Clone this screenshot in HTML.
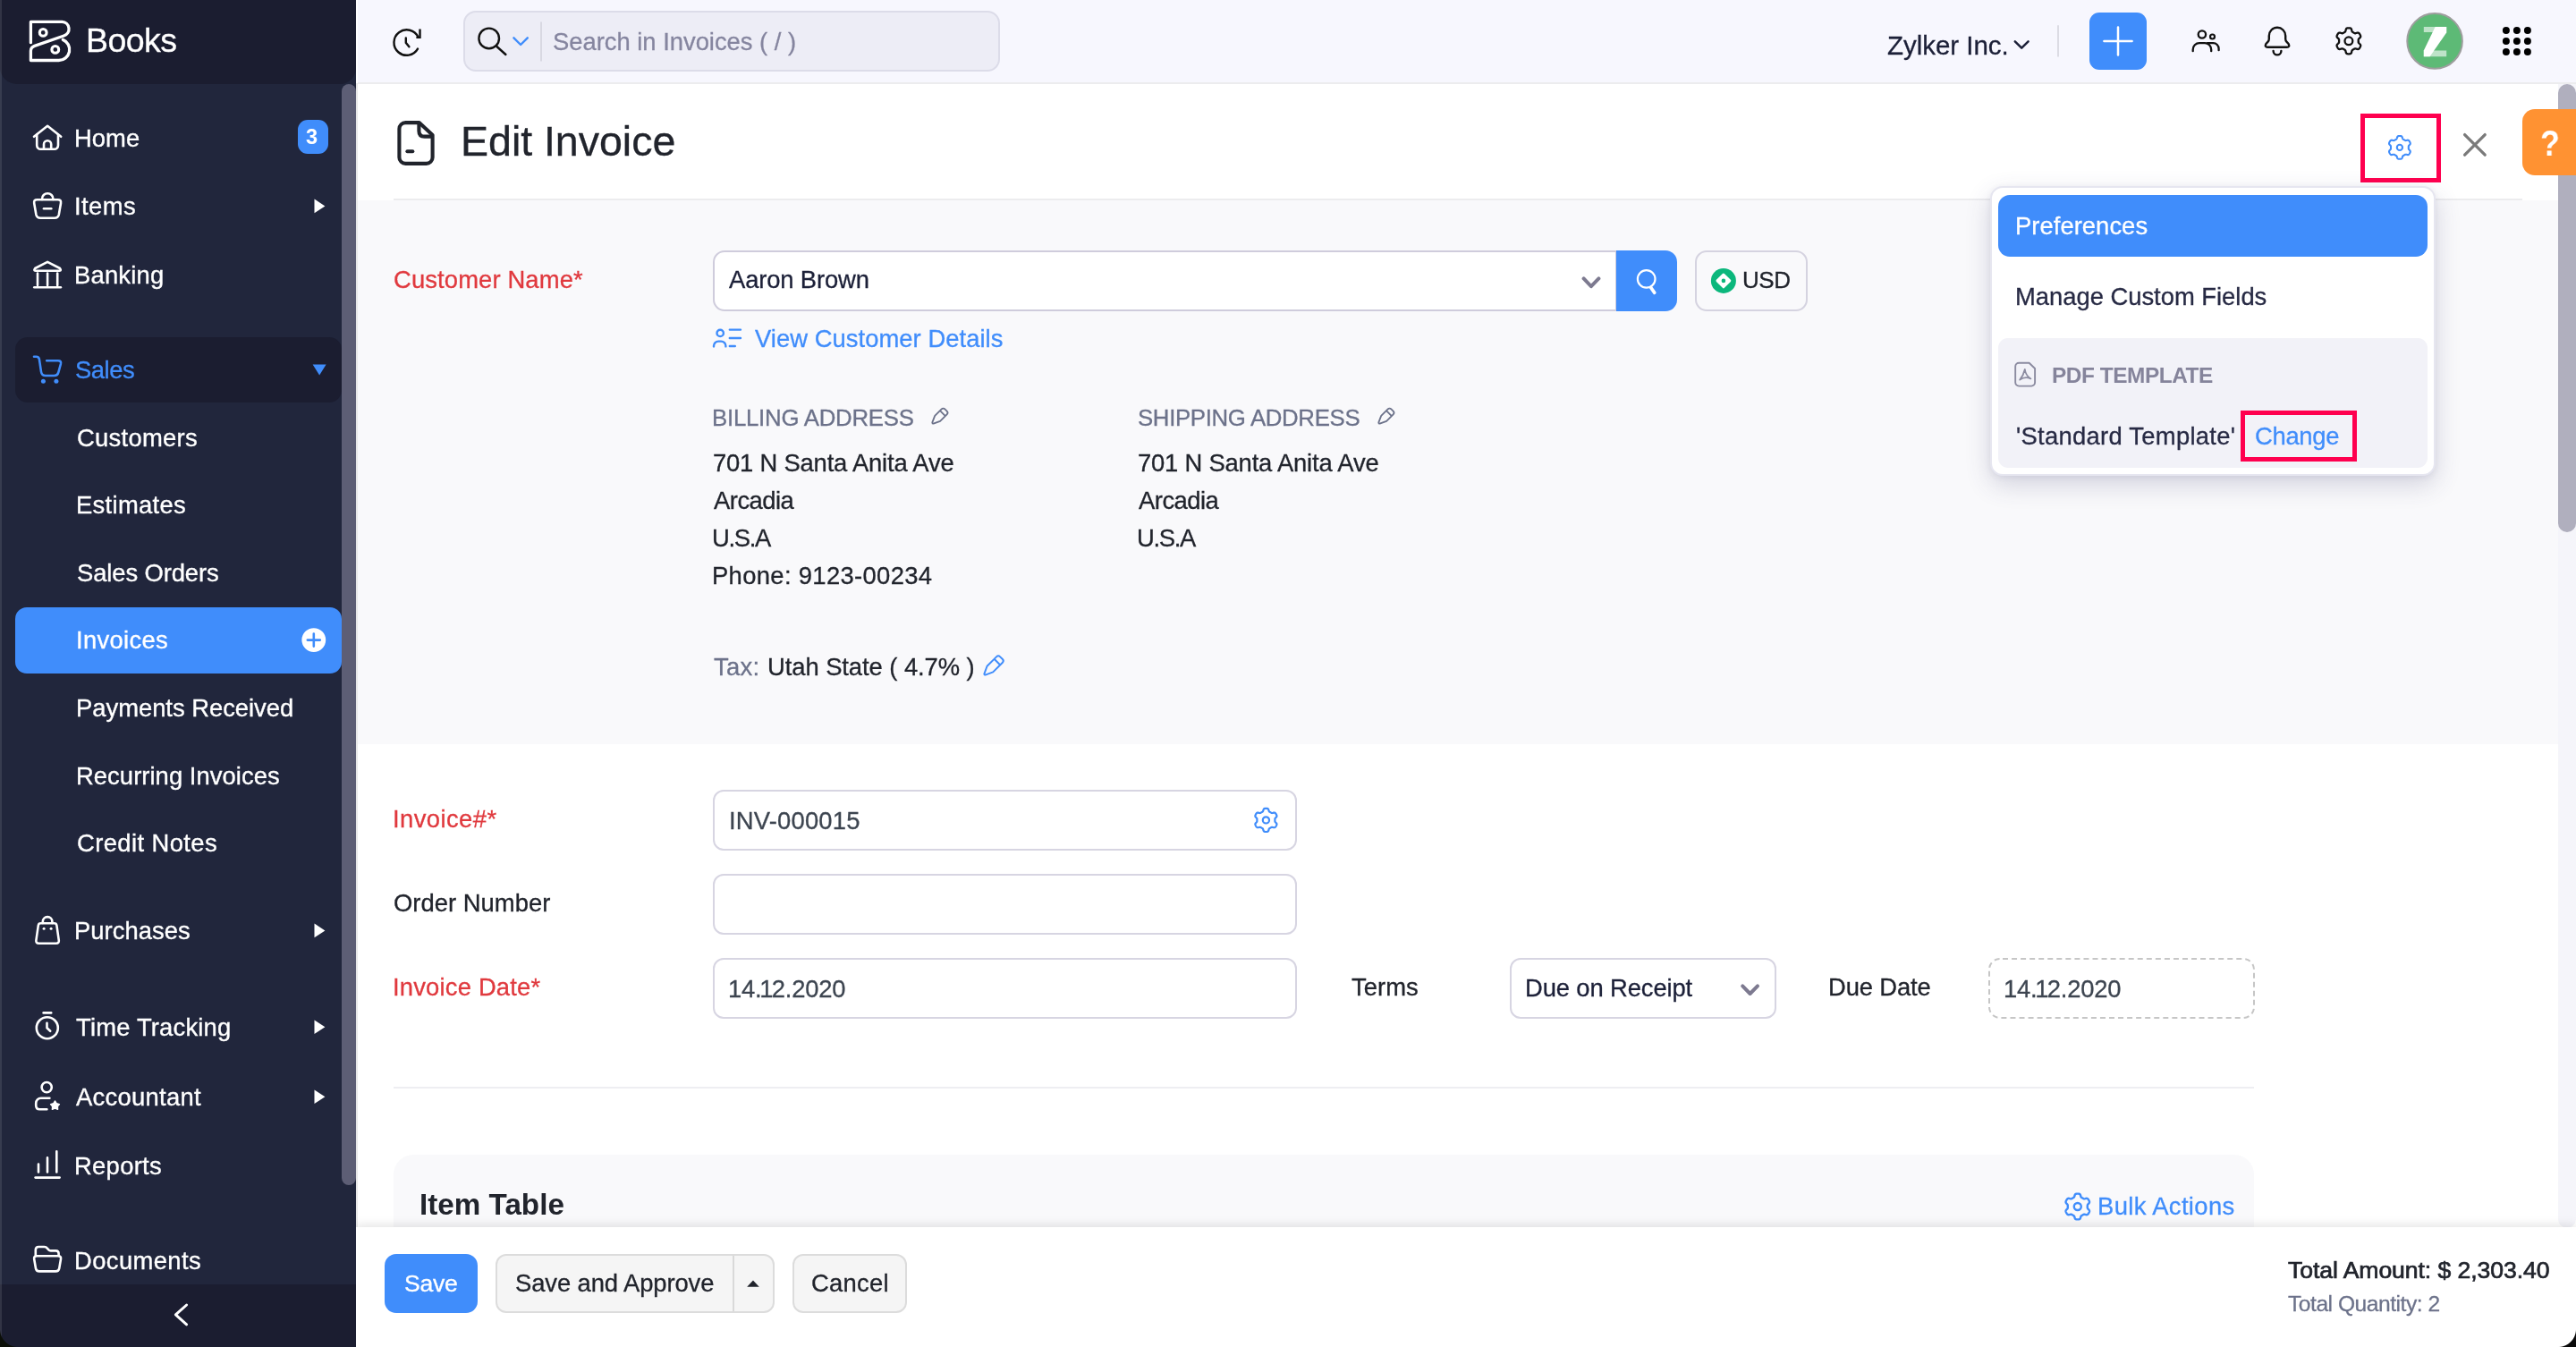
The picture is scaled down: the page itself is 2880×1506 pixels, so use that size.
<!DOCTYPE html>
<html><head><meta charset="utf-8"><title>Edit Invoice | Zoho Books</title>
<style>

*{box-sizing:border-box;margin:0;padding:0}
html,body{width:2880px;height:1506px;overflow:hidden;background:#fff}
body{font-family:"Liberation Sans",sans-serif;}
#root{position:relative;width:2880px;height:1506px;overflow:hidden;background:#fff}
.a{position:absolute}
.t{position:absolute;white-space:nowrap;will-change:transform;-webkit-text-stroke:0.3px}
svg{position:absolute;overflow:visible}
.inp{position:absolute;background:#fff;border:2px solid #d7d5e2;border-radius:12px}
.btn{position:absolute;background:#f5f5f5;border:2px solid #dcdcdc;border-radius:12px}
.ic{fill:none;stroke:#fff;stroke-width:2.6;stroke-linecap:round;stroke-linejoin:round}
.ik{fill:none;stroke:#111;stroke-width:2.6;stroke-linecap:round;stroke-linejoin:round}
.ib{fill:none;stroke:#408dfb;stroke-width:2.6;stroke-linecap:round;stroke-linejoin:round}

</style></head>
<body>
<div id="root">

<!-- main area -->
<div class="a" style="left:400px;top:0;width:2480px;height:94px;background:#f7f7fe;border-bottom:2px solid #ececee"></div>
<div class="a" style="left:398px;top:93px;width:2px;height:1413px;background:#e9e9e9"></div>
<div class="a" style="left:400px;top:224px;width:2460px;height:608px;background:#f9f9fb"></div>
<div class="a" style="left:440px;top:222px;width:2380px;height:2px;background:#ececee"></div>
<div class="a" style="left:440px;top:1215px;width:2080px;height:2px;background:#eeeef2"></div>
<div class="a" style="left:440px;top:1291px;width:2080px;height:120px;background:#f9f9fb;border-radius:22px 22px 0 0"></div>
<div class="a" style="left:518px;top:12px;width:600px;height:68px;background:#ededf6;border:2px solid #dcdce9;border-radius:14px"></div>
<!-- page scrollbar -->
<div class="a" style="left:2860px;top:94px;width:20px;height:1279px;background:#f5f5fa;border-radius:0 0 10px 10px"></div>
<div class="a" style="left:2860px;top:94px;width:20px;height:501px;background:#b0afbe;border-radius:10px"></div>
<!-- footer -->
<div class="a" style="left:398px;top:1372px;width:2482px;height:134px;background:#fff;box-shadow:0 -3px 10px rgba(0,0,0,0.10)"></div>

<!-- sidebar -->
<div class="a" style="left:0;top:0;width:398px;height:1506px;background:#21263c"></div>
<div class="a" style="left:0;top:0;width:398px;height:94px;background:#1b1d30;border-radius:0 0 18px 19px"></div>
<div class="a" style="left:382px;top:94px;width:16px;height:1231px;background:#5d5e75;border-radius:8px 8px 8px 8px"></div>
<div class="a" style="left:0;top:1436px;width:398px;height:70px;background:#1b1d30"></div>
<div class="a" style="left:17px;top:377px;width:365px;height:73px;background:#1b1d30;border-radius:14px"></div>
<div class="a" style="left:17px;top:679px;width:365px;height:74px;background:#408dfb;border-radius:13px"></div>
<div class="a" style="left:333px;top:134px;width:34px;height:38px;background:#408dfb;border-radius:11px"></div>
<div class="a" style="left:0;top:0;width:1.5px;height:1506px;background:rgba(255,255,255,0.10)"></div>
<!-- window corners -->
<div class="a" style="left:0;top:1486px;width:20px;height:20px;background:radial-gradient(circle at 20px 0px, transparent 19.5px, #0c0f08 20.5px)"></div>
<div class="a" style="left:2860px;top:1486px;width:20px;height:20px;background:radial-gradient(circle at 0px 0px, transparent 19.5px, #0a0a0a 20.5px);z-index:50"></div>
<svg style="left:30px;top:20px;width:52px;height:52px" viewBox="30 20 52 52">
<path class="ic" style="stroke-width:3.3" d="M34.4 47.7 V24.4 H69.5 A8 8 0 0 1 71.5 40 L38.6 51.4 Q34.4 53 34.4 57 V67.5 H65.5 A12 12 0 0 0 70.3 44.4"/>
<circle class="ic" style="stroke-width:3.1" cx="48.2" cy="36.4" r="3.9"/>
<circle class="ic" style="stroke-width:3.1" cx="61.8" cy="55.4" r="3.9"/>
</svg>
<svg style="left:34px;top:136px;width:38px;height:36px" viewBox="34 136 38 36">
<path class="ic" d="M38 152.8 L53.1 140.8 L68.2 152.8"/>
<path class="ic" d="M41.2 150.6 V162.6 A4.2 4.2 0 0 0 45.4 166.8 H60.8 A4.2 4.2 0 0 0 65 162.6 V150.6"/>
<path class="ic" d="M49 166.6 V161.3 A4.1 4.1 0 0 1 57.2 161.3 V166.6"/>
</svg>
<svg style="left:34px;top:212px;width:38px;height:36px" viewBox="34 212 38 36">
<path class="ic" d="M47 223 V222.4 A6.2 6.2 0 0 1 59.4 222.4 V223"/>
<path class="ic" d="M41.5 223.2 H64.7 Q68.6 223.2 68 227.2 L65.8 240 Q65 243.8 61 243.8 H45.2 Q41.2 243.8 40.4 240 L38.2 227.2 Q37.6 223.2 41.5 223.2 Z"/>
<path class="ic" d="M49 233.2 H57.3"/>
</svg>
<svg style="left:34px;top:288px;width:38px;height:38px" viewBox="34 288 38 38">
<path class="ic" d="M53.1 292.8 L67 300 Q69 302.6 66.4 302.8 H39.8 Q37.2 302.6 39.2 300 Z"/>
<path class="ic" d="M42 305.5 V319 M53.1 305.5 V319 M64.2 305.5 V319"/>
<path class="ic" d="M38.3 321.3 H67.9"/>
</svg>
<svg style="left:34px;top:394px;width:38px;height:38px" viewBox="34 394 38 38">
<path class="ib" d="M38 398.8 H40.5 Q43.4 398.8 43.9 401.6 L46 415.6 Q46.7 420 51 420 H60.6 Q64.4 420 65.3 416.4 L67.9 407 Q68.8 403.2 65 403.2 H52.2"/>
<circle cx="48.4" cy="426.2" r="2.5" fill="#408dfb"/><circle cx="62.9" cy="426.2" r="2.5" fill="#408dfb"/>
</svg>
<svg style="left:36px;top:1020px;width:36px;height:40px" viewBox="36 1020 36 40">
<path class="ic" d="M47.8 1032 V1030.4 A5.3 5.3 0 0 1 58.4 1030.4 V1032"/>
<path class="ic" d="M45.6 1032.2 H60.6 Q63 1032.2 63.4 1034.6 L65.8 1051.4 Q66.2 1054.8 62.8 1054.8 H43.4 Q40 1054.8 40.4 1051.4 L42.8 1034.6 Q43.2 1032.2 45.6 1032.2 Z"/>
<circle cx="49.1" cy="1038.2" r="1.5" fill="#fff"/><circle cx="57.1" cy="1038.2" r="1.5" fill="#fff"/>
</svg>
<svg style="left:36px;top:1128px;width:36px;height:38px" viewBox="36 1128 36 38">
<circle class="ic" cx="52.8" cy="1149.2" r="12"/>
<path class="ic" d="M48.6 1132.4 H57.2"/>
<path class="ic" d="M52.5 1143.8 V1149.3 L56.2 1152.8"/>
</svg>
<svg style="left:36px;top:1206px;width:36px;height:40px" viewBox="36 1206 36 40">
<circle class="ic" cx="52.2" cy="1215.6" r="5.6"/>
<path class="ic" d="M55.4 1227.8 H45.8 A5.6 5.6 0 0 0 40.2 1233.4 V1236 Q40.2 1240.2 44.4 1240.2 H52.4"/>
<path fill="#fff" stroke="#fff" stroke-width="1.4" stroke-linejoin="round" d="M61.5 1231.0 L63.3 1233.8 L66.4 1234.6 L64.4 1237.1 L64.6 1240.4 L61.5 1239.2 L58.4 1240.4 L58.6 1237.1 L56.6 1234.6 L59.7 1233.8 Z"/>
</svg>
<svg style="left:36px;top:1282px;width:34px;height:38px" viewBox="36 1282 34 38">
<path class="ic" d="M43 1301.6 V1310.4 M53 1294.4 V1310.4 M63.3 1287.2 V1310.4"/>
<path class="ic" d="M39.6 1316.6 H66.6"/>
</svg>
<svg style="left:34px;top:1390px;width:38px;height:36px" viewBox="34 1390 38 36">
<path class="ic" d="M39.8 1403.6 V1397.4 Q39.8 1394 43.2 1394 H49.6 Q51.6 1394 52.8 1395.6 L54.4 1397.4 Q55.2 1398.4 56.8 1398.4 H62.4 Q65.6 1398.4 65.6 1401.6 V1403.6"/>
<path class="ic" d="M41.2 1404.2 H65 Q68.6 1404.2 68 1407.8 L66.2 1418.2 Q65.6 1421.4 62.2 1421.4 H44 Q40.6 1421.4 40 1418.2 L38.2 1407.8 Q37.6 1404.2 41.2 1404.2 Z"/>
</svg>
<svg style="left:345px;top:190px;width:30px;height:1110px" viewBox="345 190 30 1110">
<path fill="#fff" d="M351.5 222.6 L363.4 230.4 L351.5 238.2 Z"/>
<path fill="#fff" d="M351.5 1032.6 L363.4 1040.4 L351.5 1048.2 Z"/>
<path fill="#fff" d="M351.5 1140.4 L363.4 1148.2 L351.5 1156 Z"/>
<path fill="#fff" d="M351.5 1218.4 L363.4 1226.2 L351.5 1234 Z"/>
</svg>
<svg style="left:345px;top:400px;width:30px;height:30px" viewBox="345 400 30 30"><path fill="#408dfb" d="M349.6 407.6 H364.6 L357.1 419.4 Z"/></svg>
<svg style="left:336px;top:701px;width:30px;height:30px" viewBox="336 701 30 30">
<circle cx="350.8" cy="715.6" r="13.4" fill="#fff"/>
<path d="M350.8 708.6 V722.6 M343.8 715.6 H357.8" stroke="#408dfb" stroke-width="2.6" stroke-linecap="round" fill="none"/>
</svg>
<svg style="left:190px;top:1454px;width:26px;height:32px" viewBox="190 1454 26 32"><path class="ic" style="stroke-width:3" d="M208.6 1459 L196.4 1469.9 L208.6 1480.8"/></svg>
<svg style="left:436px;top:28px;width:38px;height:38px" viewBox="436 28 38 38">
<path class="ik" style="stroke-width:2.4" d="M467.5 41.5 A14.2 14.2 0 1 0 467.0 54.6"/>
<path class="ik" style="stroke-width:2.4;stroke-linejoin:miter;stroke-linecap:butt" d="M469.5 32.6 V41.9 H465.4"/>
<path class="ik" style="stroke-width:2.4;stroke-linejoin:miter" d="M453.8 42.4 V47.8 L457.4 52.2"/>
</svg>
<svg style="left:530px;top:26px;width:80px;height:46px" viewBox="530 26 80 46">
<circle class="ik" style="stroke-width:2.4" cx="546.7" cy="42.9" r="11.3"/>
<path class="ik" style="stroke-width:2.4" d="M555.4 52 L565.4 61"/>
<path class="ib" style="stroke-width:2.4" d="M574.4 42.3 L582.1 50 L589.8 42.3"/>
<path d="M605 24.5 V68.5" stroke="#d8d8e2" stroke-width="2" fill="none"/>
</svg>
<svg style="left:2248px;top:24px;width:60px;height:46px" viewBox="2248 24 60 46">
<path class="ik" style="stroke:#1c2038;stroke-width:2.5" d="M2252.8 46.3 L2260.2 53.7 L2267.6 46.3"/>
<path d="M2301 28.2 V63.4" stroke="#dcdce4" stroke-width="2" fill="none"/>
</svg>
<div class="a" style="left:2336px;top:14px;width:64px;height:64px;background:#408dfb;border-radius:11px"></div>
<svg style="left:2336px;top:14px;width:64px;height:64px" viewBox="2336 14 64 64"><path d="M2352.4 45.9 H2383.6 M2368 30.4 V61.6" stroke="#fff" stroke-width="2.5" stroke-linecap="round" fill="none"/></svg>
<svg style="left:2446px;top:28px;width:40px;height:36px" viewBox="2446 28 40 36">
<circle class="ik" style="stroke-width:2.3" cx="2461.9" cy="38.5" r="4.2"/>
<circle class="ik" style="stroke-width:2.2" cx="2473.5" cy="41" r="2.5"/>
<path class="ik" style="stroke-width:2.3" d="M2451.7 57.2 V55.4 A7.2 7.2 0 0 1 2458.9 48.2 H2465 A7.2 7.2 0 0 1 2472.2 55.4 V57.2"/>
<path class="ik" style="stroke-width:2.3" d="M2468 48.2 H2474.4 A6.2 6.2 0 0 1 2480.6 54.4 V56.2"/>
</svg>
<svg style="left:2528px;top:26px;width:36px;height:40px" viewBox="2528 26 36 40">
<path class="ik" style="stroke-width:2.4" d="M2546 30.8 A9.2 9.2 0 0 1 2555.2 40 V43.6 Q2555.2 45.4 2556.4 46.6 L2558.6 49 Q2560.4 52.8 2556.8 52.8 H2535.2 Q2531.6 52.8 2533.4 49 L2535.6 46.6 Q2536.8 45.4 2536.8 43.6 V40 A9.2 9.2 0 0 1 2546 30.8 Z"/>
<path class="ik" style="stroke-width:2.4" d="M2541.6 57 A4.4 4.4 0 0 0 2550.4 57"/>
</svg>
<svg style="left:2608px;top:28px;width:36px;height:36px" viewBox="2608 28 36 36"><path d="M2636.70 45.80 L2636.70 46.18 L2636.69 46.55 L2636.70 46.94 L2636.74 47.32 L2636.86 47.73 L2637.18 48.20 L2637.76 48.76 L2638.47 49.40 L2639.00 50.06 L2639.21 50.65 L2639.21 51.18 L2639.09 51.67 L2638.91 52.15 L2638.70 52.61 L2638.46 53.05 L2638.19 53.48 L2637.90 53.90 L2637.58 54.29 L2637.21 54.64 L2636.75 54.91 L2636.13 55.01 L2635.31 54.89 L2634.39 54.59 L2633.61 54.37 L2633.06 54.33 L2632.64 54.42 L2632.28 54.59 L2631.95 54.77 L2631.63 54.96 L2631.30 55.15 L2630.97 55.34 L2630.64 55.53 L2630.32 55.72 L2630.00 55.95 L2629.71 56.26 L2629.46 56.76 L2629.27 57.55 L2629.06 58.49 L2628.76 59.27 L2628.36 59.75 L2627.90 60.02 L2627.41 60.16 L2626.91 60.24 L2626.41 60.29 L2625.90 60.30 L2625.39 60.29 L2624.89 60.24 L2624.39 60.16 L2623.90 60.02 L2623.44 59.75 L2623.04 59.27 L2622.74 58.49 L2622.53 57.55 L2622.34 56.76 L2622.09 56.26 L2621.80 55.95 L2621.48 55.72 L2621.16 55.53 L2620.83 55.34 L2620.50 55.15 L2620.17 54.96 L2619.85 54.77 L2619.52 54.59 L2619.16 54.42 L2618.74 54.33 L2618.19 54.37 L2617.41 54.59 L2616.49 54.89 L2615.67 55.01 L2615.05 54.91 L2614.59 54.64 L2614.22 54.29 L2613.90 53.90 L2613.61 53.48 L2613.34 53.05 L2613.10 52.61 L2612.89 52.15 L2612.71 51.67 L2612.59 51.18 L2612.59 50.65 L2612.80 50.06 L2613.33 49.40 L2614.04 48.76 L2614.62 48.20 L2614.94 47.73 L2615.06 47.32 L2615.10 46.94 L2615.11 46.55 L2615.10 46.18 L2615.10 45.80 L2615.10 45.42 L2615.11 45.05 L2615.10 44.66 L2615.06 44.28 L2614.94 43.87 L2614.62 43.40 L2614.04 42.84 L2613.33 42.20 L2612.80 41.54 L2612.59 40.95 L2612.59 40.42 L2612.71 39.93 L2612.89 39.45 L2613.10 38.99 L2613.34 38.55 L2613.61 38.12 L2613.90 37.70 L2614.22 37.31 L2614.59 36.96 L2615.05 36.69 L2615.67 36.59 L2616.49 36.71 L2617.41 37.01 L2618.19 37.23 L2618.74 37.27 L2619.16 37.18 L2619.52 37.01 L2619.85 36.83 L2620.17 36.64 L2620.50 36.45 L2620.83 36.26 L2621.16 36.07 L2621.48 35.88 L2621.80 35.65 L2622.09 35.34 L2622.34 34.84 L2622.53 34.05 L2622.74 33.11 L2623.04 32.33 L2623.44 31.85 L2623.90 31.58 L2624.39 31.44 L2624.89 31.36 L2625.39 31.31 L2625.90 31.30 L2626.41 31.31 L2626.91 31.36 L2627.41 31.44 L2627.90 31.58 L2628.36 31.85 L2628.76 32.33 L2629.06 33.11 L2629.27 34.05 L2629.46 34.84 L2629.71 35.34 L2630.00 35.65 L2630.32 35.88 L2630.64 36.07 L2630.97 36.26 L2631.30 36.45 L2631.63 36.64 L2631.95 36.83 L2632.28 37.01 L2632.64 37.18 L2633.06 37.27 L2633.61 37.23 L2634.39 37.01 L2635.31 36.71 L2636.13 36.59 L2636.75 36.69 L2637.21 36.96 L2637.58 37.31 L2637.90 37.70 L2638.19 38.12 L2638.46 38.55 L2638.70 38.99 L2638.91 39.45 L2639.09 39.93 L2639.21 40.42 L2639.21 40.95 L2639.00 41.54 L2638.47 42.20 L2637.76 42.84 L2637.18 43.40 L2636.86 43.87 L2636.74 44.28 L2636.70 44.66 L2636.69 45.05 L2636.70 45.42Z" fill="none" stroke="#111" stroke-width="2.3" stroke-linejoin="round"/><circle cx="2625.9" cy="45.8" r="4.4" fill="none" stroke="#111" stroke-width="2.3"/></svg>
<svg style="left:2688px;top:12px;width:68px;height:68px" viewBox="2688 12 68 68">
<circle cx="2722.1" cy="45.9" r="30.8" fill="#5dba76" stroke="#9e9e9e" stroke-width="2"/>
<path fill="#ffffff" fill-opacity="0.6" d="M2709.8 29.9 H2735.2 V35.9 H2709.8 Z M2709.8 56.6 H2735.2 V63.2 H2709.8 Z"/>
<path fill="#ffffff" d="M2722.6 29.9 H2735.2 V36.4 L2716.6 63.2 H2709.8 V56.6 Z"/>
</svg>
<svg style="left:2796px;top:28px;width:36px;height:36px" viewBox="2796 28 36 36"><circle cx="2801.9" cy="34" r="4" fill="#000"/><circle cx="2801.9" cy="45.9" r="4" fill="#000"/><circle cx="2801.9" cy="57.9" r="4" fill="#000"/><circle cx="2813.9" cy="34" r="4" fill="#000"/><circle cx="2813.9" cy="45.9" r="4" fill="#000"/><circle cx="2813.9" cy="57.9" r="4" fill="#000"/><circle cx="2825.9" cy="34" r="4" fill="#000"/><circle cx="2825.9" cy="45.9" r="4" fill="#000"/><circle cx="2825.9" cy="57.9" r="4" fill="#000"/></svg>
<svg style="left:440px;top:130px;width:50px;height:60px" viewBox="440 130 50 60">
<path d="M453.4 137.1 H468.6 L483.6 151 V175.9 A7 7 0 0 1 476.6 182.9 H453.4 A7 7 0 0 1 446.4 175.9 V144.1 A7 7 0 0 1 453.4 137.1 Z" fill="none" stroke="#21242c" stroke-width="4.1" stroke-linejoin="round"/>
<path d="M468.4 138.5 V146.4 Q468.4 152.6 474.6 152.6 H482.4" fill="none" stroke="#21242c" stroke-width="4.1" stroke-linejoin="round"/>
<path d="M455.4 169.3 H461.3" fill="none" stroke="#21242c" stroke-width="4.1" stroke-linecap="round"/>
</svg>
<div class="a" style="left:2639px;top:127px;width:90px;height:77px;border:5px solid #ff004f"></div>
<svg style="left:2664px;top:146px;width:38px;height:38px" viewBox="2664 146 38 38"><path d="M2692.80 164.90 L2692.80 165.25 L2692.79 165.59 L2692.79 165.94 L2692.82 166.29 L2692.91 166.67 L2693.16 167.08 L2693.62 167.57 L2694.19 168.14 L2694.61 168.70 L2694.77 169.22 L2694.75 169.69 L2694.64 170.13 L2694.48 170.55 L2694.29 170.95 L2694.07 171.35 L2693.84 171.73 L2693.58 172.10 L2693.30 172.45 L2692.97 172.77 L2692.58 173.02 L2692.05 173.14 L2691.35 173.06 L2690.58 172.85 L2689.92 172.70 L2689.44 172.69 L2689.07 172.79 L2688.75 172.95 L2688.45 173.12 L2688.15 173.30 L2687.85 173.47 L2687.55 173.64 L2687.25 173.81 L2686.95 173.99 L2686.65 174.19 L2686.38 174.46 L2686.14 174.88 L2685.95 175.52 L2685.74 176.30 L2685.46 176.94 L2685.09 177.34 L2684.68 177.56 L2684.24 177.68 L2683.80 177.75 L2683.35 177.79 L2682.90 177.80 L2682.45 177.79 L2682.00 177.75 L2681.56 177.68 L2681.12 177.56 L2680.71 177.34 L2680.34 176.94 L2680.06 176.30 L2679.85 175.52 L2679.66 174.88 L2679.42 174.46 L2679.15 174.19 L2678.85 173.99 L2678.55 173.81 L2678.25 173.64 L2677.95 173.47 L2677.65 173.30 L2677.35 173.12 L2677.05 172.95 L2676.73 172.79 L2676.36 172.69 L2675.88 172.70 L2675.22 172.85 L2674.45 173.06 L2673.75 173.14 L2673.22 173.02 L2672.83 172.77 L2672.50 172.45 L2672.22 172.10 L2671.96 171.73 L2671.73 171.35 L2671.51 170.95 L2671.32 170.55 L2671.16 170.13 L2671.05 169.69 L2671.03 169.22 L2671.19 168.70 L2671.61 168.14 L2672.18 167.57 L2672.64 167.08 L2672.89 166.67 L2672.98 166.29 L2673.01 165.94 L2673.01 165.59 L2673.00 165.25 L2673.00 164.90 L2673.00 164.55 L2673.01 164.21 L2673.01 163.86 L2672.98 163.51 L2672.89 163.13 L2672.64 162.72 L2672.18 162.23 L2671.61 161.66 L2671.19 161.10 L2671.03 160.58 L2671.05 160.11 L2671.16 159.67 L2671.32 159.25 L2671.51 158.85 L2671.73 158.45 L2671.96 158.07 L2672.22 157.70 L2672.50 157.35 L2672.83 157.03 L2673.22 156.78 L2673.75 156.66 L2674.45 156.74 L2675.22 156.95 L2675.88 157.10 L2676.36 157.11 L2676.73 157.01 L2677.05 156.85 L2677.35 156.68 L2677.65 156.50 L2677.95 156.33 L2678.25 156.16 L2678.55 155.99 L2678.85 155.81 L2679.15 155.61 L2679.42 155.34 L2679.66 154.92 L2679.85 154.28 L2680.06 153.50 L2680.34 152.86 L2680.71 152.46 L2681.12 152.24 L2681.56 152.12 L2682.00 152.05 L2682.45 152.01 L2682.90 152.00 L2683.35 152.01 L2683.80 152.05 L2684.24 152.12 L2684.68 152.24 L2685.09 152.46 L2685.46 152.86 L2685.74 153.50 L2685.95 154.28 L2686.14 154.92 L2686.38 155.34 L2686.65 155.61 L2686.95 155.81 L2687.25 155.99 L2687.55 156.16 L2687.85 156.33 L2688.15 156.50 L2688.45 156.68 L2688.75 156.85 L2689.07 157.01 L2689.44 157.11 L2689.92 157.10 L2690.58 156.95 L2691.35 156.74 L2692.05 156.66 L2692.58 156.78 L2692.97 157.03 L2693.30 157.35 L2693.58 157.70 L2693.84 158.07 L2694.07 158.45 L2694.29 158.85 L2694.48 159.25 L2694.64 159.67 L2694.75 160.11 L2694.77 160.58 L2694.61 161.10 L2694.19 161.66 L2693.62 162.23 L2693.16 162.72 L2692.91 163.13 L2692.82 163.51 L2692.79 163.86 L2692.79 164.21 L2692.80 164.55Z" fill="none" stroke="#408dfb" stroke-width="2.1" stroke-linejoin="round"/><circle cx="2682.9" cy="164.9" r="3.1" fill="none" stroke="#408dfb" stroke-width="2.1"/></svg>
<svg style="left:2750px;top:146px;width:34px;height:34px" viewBox="2750 146 34 34"><path d="M2755.6 150.6 L2778.2 173.2 M2778.2 150.6 L2755.6 173.2" stroke="#7a7a7a" stroke-width="3.3" stroke-linecap="round" fill="none"/></svg>
<div class="a" style="left:2820px;top:122px;width:60px;height:74px;background:#ff9232;border-radius:14px 0 0 14px;z-index:5"></div>
<div class="inp" style="left:797px;top:280px;width:1011px;height:68px;border-color:#cfccdc;border-radius:13px 0 0 13px"></div>
<div class="a" style="left:1807px;top:280px;width:68px;height:68px;background:#408dfb;border-radius:0 13px 13px 0"></div>
<svg style="left:1764px;top:300px;width:120px;height:34px" viewBox="1764 300 120 34">
<path d="M1770.6 311.4 L1778.9 320.2 L1787.4 311.4" fill="none" stroke="#7d7a90" stroke-width="4" stroke-linecap="round" stroke-linejoin="round"/>
<circle cx="1840.7" cy="311.9" r="9.8" fill="none" stroke="#fff" stroke-width="2.2"/>
<path d="M1845.6 321.4 L1849.8 327.4" stroke="#fff" stroke-width="3.6" stroke-linecap="round" fill="none"/>
</svg>
<div class="a" style="left:1895px;top:280px;width:126px;height:68px;border:2px solid #d5d3e0;border-radius:13px"></div>
<svg style="left:1912px;top:299px;width:30px;height:30px" viewBox="1912 299 30 30">
<circle cx="1926.9" cy="313.9" r="14" fill="#0bb77c"/>
<path d="M1926.9 307 L1933.8 313.9 L1926.9 320.8 L1920 313.9 Z" fill="#fff" stroke="#fff" stroke-width="3" stroke-linejoin="round"/>
<circle cx="1926.9" cy="313.9" r="2.3" fill="#0bb77c"/>
</svg>
<svg style="left:794px;top:364px;width:40px;height:28px" viewBox="794 364 40 28">
<circle class="ib" style="stroke-width:2.4" cx="805.2" cy="372.4" r="3.7"/>
<path class="ib" style="stroke-width:2.4" d="M798 387.4 V386.8 A5.2 5.2 0 0 1 803.2 381.6 H806.2 A5.2 5.2 0 0 1 811.4 386.8 V387.4"/>
<path class="ib" style="stroke-width:2.4" d="M815.8 368.6 H828 M815.8 378 H828 M815.8 387 H821.8"/>
</svg>
<svg style="left:1036px;top:452px;width:30px;height:30px" viewBox="1036 452 30 30"><g transform="translate(1050.0 466.0) rotate(45)"><path d="M-4.2 -8.0 a2.6 2.6 0 0 1 2.6 -2.6 h3.2 a2.6 2.6 0 0 1 2.6 2.6 V2.62 L0.9 10.0 Q0 10.9 -0.9 10.0 L-4.2 2.62 Z M-4.2 -5.512 H4.2" fill="none" stroke="#6c728a" stroke-width="1.8" stroke-linejoin="round" stroke-linecap="round"/></g></svg>
<svg style="left:1535px;top:452px;width:30px;height:30px" viewBox="1535 452 30 30"><g transform="translate(1549.0 466.0) rotate(45)"><path d="M-4.2 -8.0 a2.6 2.6 0 0 1 2.6 -2.6 h3.2 a2.6 2.6 0 0 1 2.6 2.6 V2.62 L0.9 10.0 Q0 10.9 -0.9 10.0 L-4.2 2.62 Z M-4.2 -5.512 H4.2" fill="none" stroke="#6c728a" stroke-width="1.8" stroke-linejoin="round" stroke-linecap="round"/></g></svg>
<svg style="left:1095px;top:730px;width:32px;height:32px" viewBox="1095 730 32 32"><g transform="translate(1110.0 745.0) rotate(45)"><path d="M-4.7 -10.700000000000001 a2.6 2.6 0 0 1 2.6 -2.6 h4.2 a2.6 2.6 0 0 1 2.6 2.6 V4.370000000000001 L0.9 12.700000000000001 Q0 13.600000000000001 -0.9 12.700000000000001 L-4.7 4.370000000000001 Z M-4.7 -6.916 H4.7" fill="none" stroke="#408dfb" stroke-width="2.0" stroke-linejoin="round" stroke-linecap="round"/></g></svg>
<div class="inp" style="left:797px;top:883px;width:653px;height:68px"></div>
<div class="inp" style="left:797px;top:977px;width:653px;height:68px"></div>
<div class="inp" style="left:797px;top:1071px;width:653px;height:68px"></div>
<svg style="left:1396px;top:898px;width:38px;height:38px" viewBox="1396 898 38 38"><path d="M1425.40 916.90 L1425.40 917.25 L1425.39 917.60 L1425.39 917.95 L1425.42 918.31 L1425.52 918.68 L1425.78 919.11 L1426.26 919.61 L1426.85 920.18 L1427.28 920.76 L1427.45 921.29 L1427.43 921.76 L1427.32 922.21 L1427.16 922.63 L1426.96 923.05 L1426.74 923.45 L1426.51 923.84 L1426.25 924.22 L1425.96 924.57 L1425.63 924.89 L1425.22 925.14 L1424.68 925.26 L1423.97 925.17 L1423.17 924.95 L1422.50 924.79 L1422.01 924.77 L1421.63 924.87 L1421.31 925.03 L1421.00 925.20 L1420.70 925.38 L1420.40 925.56 L1420.10 925.73 L1419.79 925.90 L1419.49 926.08 L1419.19 926.28 L1418.92 926.56 L1418.68 926.99 L1418.48 927.66 L1418.28 928.46 L1418.00 929.12 L1417.63 929.53 L1417.21 929.75 L1416.76 929.88 L1416.31 929.95 L1415.86 929.99 L1415.40 930.00 L1414.94 929.99 L1414.49 929.95 L1414.04 929.88 L1413.59 929.75 L1413.17 929.53 L1412.80 929.12 L1412.52 928.46 L1412.32 927.66 L1412.12 926.99 L1411.88 926.56 L1411.61 926.28 L1411.31 926.08 L1411.01 925.90 L1410.70 925.73 L1410.40 925.56 L1410.10 925.38 L1409.80 925.20 L1409.49 925.03 L1409.17 924.87 L1408.79 924.77 L1408.30 924.79 L1407.63 924.95 L1406.83 925.17 L1406.12 925.26 L1405.58 925.14 L1405.17 924.89 L1404.84 924.57 L1404.55 924.22 L1404.29 923.84 L1404.06 923.45 L1403.84 923.05 L1403.64 922.63 L1403.48 922.21 L1403.37 921.76 L1403.35 921.29 L1403.52 920.76 L1403.95 920.18 L1404.54 919.61 L1405.02 919.11 L1405.28 918.68 L1405.38 918.31 L1405.41 917.95 L1405.41 917.60 L1405.40 917.25 L1405.40 916.90 L1405.40 916.55 L1405.41 916.20 L1405.41 915.85 L1405.38 915.49 L1405.28 915.12 L1405.02 914.69 L1404.54 914.19 L1403.95 913.62 L1403.52 913.04 L1403.35 912.51 L1403.37 912.04 L1403.48 911.59 L1403.64 911.17 L1403.84 910.75 L1404.06 910.35 L1404.29 909.96 L1404.55 909.58 L1404.84 909.23 L1405.17 908.91 L1405.58 908.66 L1406.12 908.54 L1406.83 908.63 L1407.63 908.85 L1408.30 909.01 L1408.79 909.03 L1409.17 908.93 L1409.49 908.77 L1409.80 908.60 L1410.10 908.42 L1410.40 908.24 L1410.70 908.07 L1411.01 907.90 L1411.31 907.72 L1411.61 907.52 L1411.88 907.24 L1412.12 906.81 L1412.32 906.14 L1412.52 905.34 L1412.80 904.68 L1413.17 904.27 L1413.59 904.05 L1414.04 903.92 L1414.49 903.85 L1414.94 903.81 L1415.40 903.80 L1415.86 903.81 L1416.31 903.85 L1416.76 903.92 L1417.21 904.05 L1417.63 904.27 L1418.00 904.68 L1418.28 905.34 L1418.48 906.14 L1418.68 906.81 L1418.92 907.24 L1419.19 907.52 L1419.49 907.72 L1419.79 907.90 L1420.10 908.07 L1420.40 908.24 L1420.70 908.42 L1421.00 908.60 L1421.31 908.77 L1421.63 908.93 L1422.01 909.03 L1422.50 909.01 L1423.17 908.85 L1423.97 908.63 L1424.68 908.54 L1425.22 908.66 L1425.63 908.91 L1425.96 909.23 L1426.25 909.58 L1426.51 909.96 L1426.74 910.35 L1426.96 910.75 L1427.16 911.17 L1427.32 911.59 L1427.43 912.04 L1427.45 912.51 L1427.28 913.04 L1426.85 913.62 L1426.26 914.19 L1425.78 914.69 L1425.52 915.12 L1425.42 915.49 L1425.39 915.85 L1425.39 916.20 L1425.40 916.55Z" fill="none" stroke="#408dfb" stroke-width="2.2" stroke-linejoin="round"/><circle cx="1415.4" cy="916.9" r="3.6" fill="none" stroke="#408dfb" stroke-width="2.2"/></svg>
<div class="inp" style="left:1688px;top:1071px;width:298px;height:68px"></div>
<svg style="left:1940px;top:1094px;width:34px;height:26px" viewBox="1940 1094 34 26"><path d="M1948.2 1102.4 L1956.6 1111 L1965 1102.4" fill="none" stroke="#7d7a90" stroke-width="4" stroke-linecap="round" stroke-linejoin="round"/></svg>
<svg style="left:2222px;top:1070px;width:300px;height:70px" viewBox="2222 1070 300 70"><rect x="2224" y="1072" width="296" height="66" rx="12" ry="12" fill="#fff" stroke="#c6c6c6" stroke-width="2" stroke-dasharray="6 4.05" stroke-dashoffset="-3"/></svg>
<svg style="left:2303px;top:1330px;width:40px;height:40px" viewBox="2303 1330 40 40"><path d="M2333.80 1349.00 L2333.80 1349.38 L2333.79 1349.77 L2333.79 1350.16 L2333.82 1350.55 L2333.93 1350.96 L2334.21 1351.43 L2334.74 1351.98 L2335.39 1352.61 L2335.86 1353.24 L2336.04 1353.82 L2336.03 1354.34 L2335.91 1354.83 L2335.73 1355.30 L2335.51 1355.76 L2335.27 1356.20 L2335.01 1356.63 L2334.72 1357.04 L2334.41 1357.43 L2334.04 1357.78 L2333.60 1358.06 L2333.00 1358.19 L2332.22 1358.10 L2331.35 1357.85 L2330.61 1357.67 L2330.07 1357.66 L2329.65 1357.77 L2329.30 1357.94 L2328.96 1358.14 L2328.63 1358.33 L2328.30 1358.53 L2327.97 1358.72 L2327.63 1358.90 L2327.30 1359.10 L2326.97 1359.32 L2326.67 1359.62 L2326.41 1360.10 L2326.19 1360.83 L2325.97 1361.70 L2325.65 1362.43 L2325.25 1362.88 L2324.79 1363.13 L2324.30 1363.27 L2323.80 1363.35 L2323.30 1363.39 L2322.80 1363.40 L2322.30 1363.39 L2321.80 1363.35 L2321.30 1363.27 L2320.81 1363.13 L2320.35 1362.88 L2319.95 1362.43 L2319.63 1361.70 L2319.41 1360.83 L2319.19 1360.10 L2318.93 1359.62 L2318.63 1359.32 L2318.30 1359.10 L2317.97 1358.90 L2317.63 1358.72 L2317.30 1358.53 L2316.97 1358.33 L2316.64 1358.14 L2316.30 1357.94 L2315.95 1357.77 L2315.53 1357.66 L2314.99 1357.67 L2314.25 1357.85 L2313.38 1358.10 L2312.60 1358.19 L2312.00 1358.06 L2311.56 1357.78 L2311.19 1357.43 L2310.88 1357.04 L2310.59 1356.63 L2310.33 1356.20 L2310.09 1355.76 L2309.87 1355.30 L2309.69 1354.83 L2309.57 1354.34 L2309.56 1353.82 L2309.74 1353.24 L2310.21 1352.61 L2310.86 1351.98 L2311.39 1351.43 L2311.67 1350.96 L2311.78 1350.55 L2311.81 1350.16 L2311.81 1349.77 L2311.80 1349.38 L2311.80 1349.00 L2311.80 1348.62 L2311.81 1348.23 L2311.81 1347.84 L2311.78 1347.45 L2311.67 1347.04 L2311.39 1346.57 L2310.86 1346.02 L2310.21 1345.39 L2309.74 1344.76 L2309.56 1344.18 L2309.57 1343.66 L2309.69 1343.17 L2309.87 1342.70 L2310.09 1342.24 L2310.33 1341.80 L2310.59 1341.37 L2310.88 1340.96 L2311.19 1340.57 L2311.56 1340.22 L2312.00 1339.94 L2312.60 1339.81 L2313.38 1339.90 L2314.25 1340.15 L2314.99 1340.33 L2315.53 1340.34 L2315.95 1340.23 L2316.30 1340.06 L2316.64 1339.86 L2316.97 1339.67 L2317.30 1339.47 L2317.63 1339.28 L2317.97 1339.10 L2318.30 1338.90 L2318.63 1338.68 L2318.93 1338.38 L2319.19 1337.90 L2319.41 1337.17 L2319.63 1336.30 L2319.95 1335.57 L2320.35 1335.12 L2320.81 1334.87 L2321.30 1334.73 L2321.80 1334.65 L2322.30 1334.61 L2322.80 1334.60 L2323.30 1334.61 L2323.80 1334.65 L2324.30 1334.73 L2324.79 1334.87 L2325.25 1335.12 L2325.65 1335.57 L2325.97 1336.30 L2326.19 1337.17 L2326.41 1337.90 L2326.67 1338.38 L2326.97 1338.68 L2327.30 1338.90 L2327.63 1339.10 L2327.97 1339.28 L2328.30 1339.47 L2328.63 1339.67 L2328.96 1339.86 L2329.30 1340.06 L2329.65 1340.23 L2330.07 1340.34 L2330.61 1340.33 L2331.35 1340.15 L2332.22 1339.90 L2333.00 1339.81 L2333.60 1339.94 L2334.04 1340.22 L2334.41 1340.57 L2334.72 1340.96 L2335.01 1341.37 L2335.27 1341.80 L2335.51 1342.24 L2335.73 1342.70 L2335.91 1343.17 L2336.03 1343.66 L2336.04 1344.18 L2335.86 1344.76 L2335.39 1345.39 L2334.74 1346.02 L2334.21 1346.57 L2333.93 1347.04 L2333.82 1347.45 L2333.79 1347.84 L2333.79 1348.23 L2333.80 1348.62Z" fill="none" stroke="#408dfb" stroke-width="2.4" stroke-linejoin="round"/><circle cx="2322.8" cy="1349" r="4.0" fill="none" stroke="#408dfb" stroke-width="2.4"/></svg>
<div class="a" style="left:430px;top:1402px;width:104px;height:66px;background:#408dfb;border-radius:13px;z-index:20"></div>
<div class="btn" style="left:554px;top:1402px;width:312px;height:66px;z-index:20"></div>
<div class="a" style="left:819px;top:1404px;width:2px;height:62px;background:#d9d9d9;z-index:21"></div>
<div class="btn" style="left:886px;top:1402px;width:128px;height:66px;z-index:20"></div>
<svg style="left:830px;top:1424px;width:24px;height:22px;z-index:22" viewBox="830 1424 24 22"><path d="M835.2 1438.8 L842 1431.4 L848.8 1438.8 Z" fill="#21242c"/></svg>
<div class="a" style="left:2225px;top:208px;width:498px;height:324px;background:#fff;border:2px solid #e6e6f0;border-radius:14px;box-shadow:0 10px 28px rgba(60,60,110,0.20),0 2px 6px rgba(60,60,110,0.08);z-index:30"></div>
<div class="a" style="left:2234px;top:218px;width:480px;height:69px;background:#408dfb;border-radius:13px;z-index:31"></div>
<div class="a" style="left:2234px;top:377.5px;width:480px;height:145.5px;background:#f2f2f8;border-radius:11px;z-index:31"></div>
<div class="a" style="left:2504.5px;top:458.5px;width:130px;height:57.5px;border:5px solid #ff004f;z-index:32"></div>
<svg style="left:2248px;top:400px;width:34px;height:38px;z-index:32" viewBox="2248 400 34 38"><path d="M2257.2 405.8 H2268.6 L2275.1 412 V427.6 A4 4 0 0 1 2271.1 431.6 H2257.2 A4 4 0 0 1 2253.2 427.6 V409.8 A4 4 0 0 1 2257.2 405.8 Z" fill="none" stroke="#8b8ba0" stroke-width="1.9" stroke-linejoin="round"/><path d="M2258.2 424.6 Q2262.2 419.8 2263.8 413 Q2264.6 419.6 2270.4 423.4 Q2264 420.4 2258.2 424.6 Z" fill="none" stroke="#8b8ba0" stroke-width="1.8" stroke-linejoin="round"/></svg>

<div class="t" id="books" style="left:96.4px;top:18.8px;font-size:37.5px;line-height:52px;color:#ffffff;letter-spacing:-0.571px;-webkit-text-stroke:0.35px #ffffff;">Books</div>
<div class="t" id="home" style="left:83px;top:135.6px;font-size:27.4px;line-height:38px;color:#ffffff;letter-spacing:0.052px;-webkit-text-stroke:0.35px #ffffff;">Home</div>
<div class="t" id="b3" style="left:342.4px;top:136.7px;font-size:23.6px;line-height:33px;color:#ffffff;font-weight:bold;letter-spacing:0.336px;-webkit-text-stroke:0px #ffffff;">3</div>
<div class="t" id="items" style="left:83px;top:212.1px;font-size:27.4px;line-height:38px;color:#ffffff;letter-spacing:0.432px;-webkit-text-stroke:0.35px #ffffff;">Items</div>
<div class="t" id="banking" style="left:83px;top:289.1px;font-size:27.4px;line-height:38px;color:#ffffff;letter-spacing:0.208px;-webkit-text-stroke:0.35px #ffffff;">Banking</div>
<div class="t" id="sales" style="left:84px;top:394.6px;font-size:27.4px;line-height:38px;color:#408dfb;letter-spacing:-0.459px;-webkit-text-stroke:0.35px #408dfb;">Sales</div>
<div class="t" id="cust" style="left:86px;top:470.6px;font-size:27.4px;line-height:38px;color:#ffffff;letter-spacing:0.284px;-webkit-text-stroke:0.35px #ffffff;">Customers</div>
<div class="t" id="est" style="left:85px;top:546.1px;font-size:27.4px;line-height:38px;color:#ffffff;letter-spacing:0.306px;-webkit-text-stroke:0.35px #ffffff;">Estimates</div>
<div class="t" id="so" style="left:86px;top:622.1px;font-size:27.4px;line-height:38px;color:#ffffff;letter-spacing:-0.104px;-webkit-text-stroke:0.35px #ffffff;">Sales Orders</div>
<div class="t" id="inv" style="left:85px;top:697.1px;font-size:27.4px;line-height:38px;color:#ffffff;letter-spacing:0.316px;-webkit-text-stroke:0.35px #ffffff;">Invoices</div>
<div class="t" id="pr" style="left:85px;top:773.1px;font-size:27.4px;line-height:38px;color:#ffffff;letter-spacing:-0.023px;-webkit-text-stroke:0.35px #ffffff;">Payments Received</div>
<div class="t" id="ri" style="left:85px;top:848.6px;font-size:27.4px;line-height:38px;color:#ffffff;letter-spacing:0.050px;-webkit-text-stroke:0.35px #ffffff;">Recurring Invoices</div>
<div class="t" id="cn" style="left:86px;top:924.1px;font-size:27.4px;line-height:38px;color:#ffffff;letter-spacing:0.406px;-webkit-text-stroke:0.35px #ffffff;">Credit Notes</div>
<div class="t" id="pur" style="left:83px;top:1022.1px;font-size:27.4px;line-height:38px;color:#ffffff;letter-spacing:0.034px;-webkit-text-stroke:0.35px #ffffff;">Purchases</div>
<div class="t" id="tt" style="left:85.0px;top:1129.6px;font-size:27.4px;line-height:38px;color:#ffffff;letter-spacing:0.187px;-webkit-text-stroke:0.35px #ffffff;">Time Tracking</div>
<div class="t" id="acc" style="left:85.0px;top:1207.6px;font-size:27.4px;line-height:38px;color:#ffffff;letter-spacing:0.285px;-webkit-text-stroke:0.35px #ffffff;">Accountant</div>
<div class="t" id="rep" style="left:83px;top:1284.6px;font-size:27.4px;line-height:38px;color:#ffffff;letter-spacing:0.296px;-webkit-text-stroke:0.35px #ffffff;">Reports</div>
<div class="t" id="doc" style="left:83px;top:1390.6px;font-size:27.4px;line-height:38px;color:#ffffff;letter-spacing:0.394px;-webkit-text-stroke:0.35px #ffffff;">Documents</div>
<div class="t" id="srch" style="left:618px;top:28.1px;font-size:27.4px;line-height:38px;color:#85859f;letter-spacing:-0.016px;">Search in Invoices ( / )</div>
<div class="t" id="org" style="left:2110.0px;top:29.8px;font-size:29.5px;line-height:41px;color:#1c2038;letter-spacing:-0.037px;">Zylker Inc.</div>
<div class="t" id="title" style="left:515.2px;top:125.6px;font-size:46.6px;line-height:65px;color:#21242c;letter-spacing:-0.051px;">Edit Invoice</div>
<div class="t" id="help" style="left:2840.2px;top:132.4px;font-size:40.6px;line-height:56px;color:#fff;font-weight:bold;-webkit-text-stroke:0px #fff;transform:scaleX(0.88);transform-origin:left center;z-index:6;">?</div>
<div class="t" id="lcust" style="left:439.5px;top:293.8px;font-size:27.4px;line-height:38px;color:#e0393e;letter-spacing:0.123px;">Customer Name*</div>
<div class="t" id="aaron" style="left:815.3px;top:294.1px;font-size:27.4px;line-height:38px;color:#1c2038;letter-spacing:-0.141px;">Aaron Brown</div>
<div class="t" id="usd" style="left:1947.6px;top:295.1px;font-size:26px;line-height:36px;color:#21242c;letter-spacing:-0.415px;">USD</div>
<div class="t" id="vcd" style="left:844.3px;top:359.9px;font-size:27.4px;line-height:38px;color:#408dfb;letter-spacing:0.042px;">View Customer Details</div>
<div class="t" id="bill" style="left:796.4px;top:448.9px;font-size:25.8px;line-height:36px;color:#6c728a;letter-spacing:-0.242px;">BILLING ADDRESS</div>
<div class="t" id="ship" style="left:1272px;top:448.9px;font-size:25.8px;line-height:36px;color:#6c728a;letter-spacing:-0.343px;">SHIPPING ADDRESS</div>
<div class="t" id="b0" style="left:796.6px;top:499.3px;font-size:27.4px;line-height:38px;color:#21242c;letter-spacing:-0.200px;">701 N Santa Anita Ave</div>
<div class="t" id="s0" style="left:1272px;top:499.3px;font-size:27.4px;line-height:38px;color:#21242c;letter-spacing:-0.200px;">701 N Santa Anita Ave</div>
<div class="t" id="b1" style="left:797.6px;top:541.1px;font-size:27.4px;line-height:38px;color:#21242c;letter-spacing:-0.507px;">Arcadia</div>
<div class="t" id="s1" style="left:1273.0px;top:541.1px;font-size:27.4px;line-height:38px;color:#21242c;letter-spacing:-0.507px;">Arcadia</div>
<div class="t" id="b2" style="left:795.6px;top:582.8px;font-size:27.4px;line-height:38px;color:#21242c;letter-spacing:-1.319px;">U.S.A</div>
<div class="t" id="s2" style="left:1271px;top:582.8px;font-size:27.4px;line-height:38px;color:#21242c;letter-spacing:-1.319px;">U.S.A</div>
<div class="t" id="b3" style="left:795.6px;top:624.6px;font-size:27.4px;line-height:38px;color:#21242c;letter-spacing:0.336px;">Phone: 9123-00234</div>
<div class="t" id="taxl" style="left:797.6px;top:727.4px;font-size:27.4px;line-height:38px;color:#6c728a;letter-spacing:0.325px;">Tax:</div>
<div class="t" id="taxv" style="left:857.9px;top:727.4px;font-size:27.4px;line-height:38px;color:#21242c;letter-spacing:-0.068px;">Utah State ( 4.7% )</div>
<div class="t" id="linv" style="left:438.6px;top:897.0px;font-size:27.4px;line-height:38px;color:#e0393e;letter-spacing:0.421px;">Invoice#*</div>
<div class="t" id="lord" style="left:439.6px;top:991.0px;font-size:27.4px;line-height:38px;color:#21242c;letter-spacing:0.025px;">Order Number</div>
<div class="t" id="ldate" style="left:438.6px;top:1085.1px;font-size:27.4px;line-height:38px;color:#e0393e;letter-spacing:0.186px;">Invoice Date*</div>
<div class="t" id="invno" style="left:814.7px;top:899.2px;font-size:27.4px;line-height:38px;color:#3d4550;letter-spacing:0.196px;">INV-000015</div>
<div class="t" id="idate" style="left:813.9px;top:1086.6px;font-size:27.4px;line-height:38px;color:#3d4550;letter-spacing:-0.198px;">14.<span style="margin-left:-2.2px;margin-right:-1.6px">1</span>2.2020</div>
<div class="t" id="lterms" style="left:1511.0px;top:1084.9px;font-size:27.4px;line-height:38px;color:#21242c;letter-spacing:0.033px;">Terms</div>
<div class="t" id="terms" style="left:1705px;top:1085.8px;font-size:27.4px;line-height:38px;color:#1c2038;letter-spacing:-0.123px;">Due on Receipt</div>
<div class="t" id="ldue" style="left:2043.7px;top:1084.9px;font-size:27.4px;line-height:38px;color:#21242c;letter-spacing:-0.126px;">Due Date</div>
<div class="t" id="ddate" style="left:2240.4px;top:1086.6px;font-size:27.4px;line-height:38px;color:#3d4550;letter-spacing:-0.198px;">14.<span style="margin-left:-2.2px;margin-right:-1.6px">1</span>2.2020</div>
<div class="t" id="itab" style="left:468.8px;top:1324.0px;font-size:33.2px;line-height:46px;color:#21242c;font-weight:bold;letter-spacing:0.019px;-webkit-text-stroke:0px #21242c;">Item Table</div>
<div class="t" id="bulk" style="left:2345px;top:1330.3px;font-size:27.4px;line-height:38px;color:#408dfb;letter-spacing:0.362px;">Bulk Actions</div>
<div class="t" id="save" style="left:452.2px;top:1416.7px;font-size:26.6px;line-height:37px;color:#fff;letter-spacing:-0.278px;-webkit-text-stroke:0.3px #fff;z-index:22;">Save</div>
<div class="t" id="sapp" style="left:576px;top:1416.2px;font-size:27.4px;line-height:38px;color:#21242c;letter-spacing:-0.095px;z-index:22;">Save and Approve</div>
<div class="t" id="canc" style="left:907.1px;top:1416.2px;font-size:27.4px;line-height:38px;color:#21242c;letter-spacing:0.284px;z-index:22;">Cancel</div>
<div class="t" id="tamt" style="left:2557.7px;top:1402.1px;font-size:26.6px;line-height:37px;color:#21242c;letter-spacing:-0.075px;-webkit-text-stroke:0.7px #21242c;z-index:22;">Total Amount: $ 2,303.40</div>
<div class="t" id="tqty" style="left:2557.7px;top:1441.4px;font-size:24.6px;line-height:34px;color:#6c728a;letter-spacing:-0.471px;z-index:22;">Total Quantity: 2</div>
<div class="t" id="pref" style="left:2253.3px;top:234.0px;font-size:27.4px;line-height:38px;color:#fff;letter-spacing:0.041px;-webkit-text-stroke:0.3px #fff;z-index:33;">Preferences</div>
<div class="t" id="mcf" style="left:2253.3px;top:313.3px;font-size:27.4px;line-height:38px;color:#272a44;letter-spacing:-0.018px;z-index:33;">Manage Custom Fields</div>
<div class="t" id="pdft" style="left:2293.6px;top:402.6px;font-size:24.4px;line-height:34px;color:#85849b;font-weight:bold;letter-spacing:-0.447px;-webkit-text-stroke:0px #85849b;z-index:33;">PDF TEMPLATE</div>
<div class="t" id="stpl" style="left:2254.2px;top:469.1px;font-size:27.4px;line-height:38px;color:#272a44;letter-spacing:0.280px;z-index:33;">&#x27;Standard Template&#x27;</div>
<div class="t" id="chg" style="left:2520.5px;top:469.1px;font-size:27.4px;line-height:38px;color:#408dfb;letter-spacing:-0.304px;z-index:33;">Change</div>
</div>
</body></html>
